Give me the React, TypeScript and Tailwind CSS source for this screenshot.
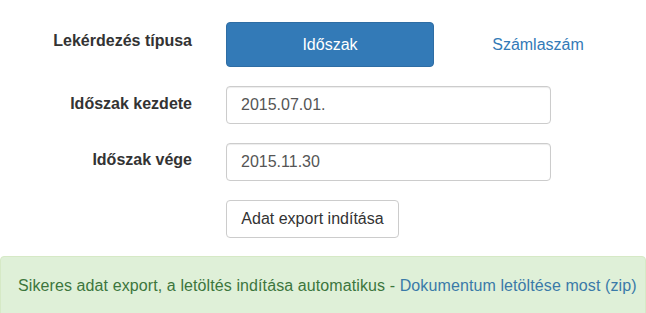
import { useState } from 'react'

type Mode = 'period' | 'invoice'

export default function App() {
  const [mode, setMode] = useState<Mode>('period')
  const [start, setStart] = useState('2015.07.01.')
  const [end, setEnd] = useState('2015.11.30')

  return (
    <div className="min-h-[313px] w-[646px] overflow-hidden bg-white font-['Liberation_Sans',Arial,sans-serif] text-[16px] text-[#333]">
      <div className="flex flex-col gap-[19px] pt-[22px]">
        <div className="flex">
          <label className="w-[192px] shrink-0 pt-[9px] text-right font-bold leading-[20px]">
            Lekérdezés típusa
          </label>
          <div className="ml-[34px] flex">
            <button
              type="button"
              onClick={() => setMode('period')}
              className={
                mode === 'period'
                  ? 'h-[45px] w-[208px] rounded-[4px] border border-[#2e6da4] bg-[#337ab7] text-white'
                  : 'h-[45px] w-[208px] rounded-[4px] border border-transparent text-[#337ab7]'
              }
            >
              Időszak
            </button>
            <button
              type="button"
              onClick={() => setMode('invoice')}
              className={
                mode === 'invoice'
                  ? 'h-[45px] w-[208px] rounded-[4px] border border-[#2e6da4] bg-[#337ab7] text-white'
                  : 'h-[45px] w-[208px] rounded-[4px] border border-transparent text-[#337ab7]'
              }
            >
              Számlaszám
            </button>
          </div>
        </div>

        <div className="flex">
          <label className="w-[192px] shrink-0 pt-[8px] text-right font-bold leading-[20px]">
            Időszak kezdete
          </label>
          <input
            value={start}
            onChange={(event) => setStart(event.target.value)}
            className="ml-[34px] h-[38px] w-[325px] rounded-[4px] border border-[#ccc] px-[14px] text-[#555] shadow-[inset_0_1px_1px_rgba(0,0,0,0.075)] outline-none"
          />
        </div>

        <div className="flex">
          <label className="w-[192px] shrink-0 pt-[7px] text-right font-bold leading-[20px]">
            Időszak vége
          </label>
          <input
            value={end}
            onChange={(event) => setEnd(event.target.value)}
            className="ml-[34px] h-[38px] w-[325px] rounded-[4px] border border-[#ccc] px-[14px] text-[#555] shadow-[inset_0_1px_1px_rgba(0,0,0,0.075)] outline-none"
          />
        </div>

        <div className="flex pl-[226px]">
          <button
            type="button"
            className="h-[38px] w-[173px] rounded-[4px] border border-[#ccc] bg-white text-[#333]"
          >
            Adat export indítása
          </button>
        </div>
      </div>

      <div className="mt-[18px] h-[70px] whitespace-nowrap rounded-[4px] border border-[#d6e9c6] bg-[#dff0d8] pl-[17px] pt-[19px] text-[16px] leading-[20px] tracking-[0.1px] text-[#3c763d]">
        Sikeres adat export, a letöltés indítása automatikus -{' '}
        <a href="#" className="text-[#3a7aa8]">
          Dokumentum letöltése most (zip)
        </a>
      </div>
    </div>
  )
}
